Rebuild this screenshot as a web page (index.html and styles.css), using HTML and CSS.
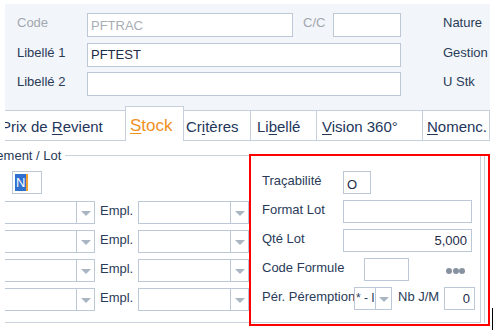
FILE: index.html
```html
<!DOCTYPE html>
<html lang="fr">
<head>
    <meta charset="UTF-8">
    <title>Article - Stock</title>
    <link rel="stylesheet" href="styles.css">
</head>
<body>
    <div class="header">
        <div class="hdr-grid">
            <span class="lbl muted">Code</span>
            <input class="fld fld-code muted-text" value="PFTRAC" readonly>
            <span class="lbl muted lbl-cc">C/C</span>
            <input class="fld" value="" readonly>
            <span class="lbl lbl-side">Nature</span>

            <span class="lbl">Libellé 1</span>
            <input class="fld fld-wide" value="PFTEST" readonly>
            <span class="lbl lbl-side">Gestion</span>

            <span class="lbl">Libellé 2</span>
            <input class="fld fld-wide" value="" readonly>
            <span class="lbl lbl-side">U Stk</span>
        </div>
    </div>

    <div class="tabs">
        <div class="tab tab-prix">Prix de <u>R</u>evient</div>
        <div class="tab tab-active"><u>S</u>tock</div>
        <div class="tab tab-crit">Cr<u>i</u>tères</div>
        <div class="tab tab-lib">Li<u>b</u>ellé</div>
        <div class="tab tab-vision"><u>V</u>ision 360°</div>
        <div class="tab tab-nom"><u>N</u>omenc.</div>
    </div>

    <div class="content">
        <div class="fs-left">
            <div class="legend"><span>Emplacement / Lot</span></div>
            <div class="row row-first">
                <div class="fld fld-n"><span class="sel">N</span></div>
            </div>
            <div class="row">
                <div class="combo combo-a"><span class="arrow"></span></div>
                <span class="lbl lbl-empl">Empl.</span>
                <div class="combo combo-b"><span class="arrow"></span></div>
            </div>
            <div class="row">
                <div class="combo combo-a"><span class="arrow"></span></div>
                <span class="lbl lbl-empl">Empl.</span>
                <div class="combo combo-b"><span class="arrow"></span></div>
            </div>
            <div class="row">
                <div class="combo combo-a"><span class="arrow"></span></div>
                <span class="lbl lbl-empl">Empl.</span>
                <div class="combo combo-b"><span class="arrow"></span></div>
            </div>
            <div class="row">
                <div class="combo combo-a"><span class="arrow"></span></div>
                <span class="lbl lbl-empl">Empl.</span>
                <div class="combo combo-b"><span class="arrow"></span></div>
            </div>
        </div>

        <div class="panel">
            <div class="panel-frame">
                <div class="panel-body">
                    <div class="row">
                        <span class="lbl plbl">Traçabilité</span>
                        <input class="fld fld-trac" value="O" readonly>
                    </div>
                    <div class="row">
                        <span class="lbl plbl">Format Lot</span>
                        <input class="fld fld-long" value="" readonly>
                    </div>
                    <div class="row">
                        <span class="lbl plbl">Qté Lot</span>
                        <input class="fld fld-long num" value="5,000" readonly>
                    </div>
                    <div class="row">
                        <span class="lbl plbl">Code Formule</span>
                        <input class="fld fld-formule" value="" readonly>
                        <span class="dots"><i></i><i></i><i></i></span>
                    </div>
                    <div class="row">
                        <span class="lbl plbl plbl-per">Pér. Péremption</span>
                        <div class="combo combo-per"><span class="combo-text">* - Illimité</span><span class="arrow"></span></div>
                        <span class="lbl lbl-nb">Nb J/M</span>
                        <input class="fld fld-nb num" value="0" readonly>
                    </div>
                </div>
            </div>
        </div>
        <div class="caret"></div>
    </div>
</body>
</html>
```

FILE: styles.css
```css
* {
    box-sizing: border-box;
}

body {
    margin: 0;
    width: 498px;
    height: 330px;
    overflow: hidden;
    background: #fff;
    font-family: "Liberation Sans", Arial, sans-serif;
    font-size: 13px;
    color: #2a3b58;
}

/* top block */
.header {
    margin: 4px 8px 0 5px;
    height: 102px;
    background: #f2f5f9;
    padding: 9px 0 0 12px;
}

.hdr-grid {
    display: grid;
    grid-template-columns: 70px 206px 40px 68px 42px 1fr;
    grid-auto-rows: 24px;
    row-gap: 5.5px;
}

.lbl {
    line-height: 20px;
    white-space: nowrap;
}

.muted {
    color: #a2a7af;
}

.lbl-cc {
    padding-left: 10px;
}

.lbl-side {
    grid-column: 6;
}

.fld {
    height: 24px;
    border: 1px solid #bcc8d5;
    background: #fff;
    font-family: inherit;
    font-size: 13px;
    color: #1c2b47;
    padding: 0 3px;
    outline: none;
    margin: 0;
}

.muted-text {
    color: #a8adb4;
}

.fld-wide {
    grid-column: 2 / 5;
}

/* tabs */
.tabs {
    display: flex;
    align-items: flex-end;
    height: 35px;
    margin: 0 8px 0 5px;
    background: #f2f5f9;
    overflow: hidden;
}

.tab {
    flex: none;
    height: 31px;
    background: #fff;
    border-top: 1px solid #c5d0dc;
    border-bottom: 1px solid #c5d0dc;
    border-right: 1px solid #c5d0dc;
    padding: 2px 0 0 4px;
    line-height: 27px;
    font-size: 15px;
    color: #23365a;
    white-space: nowrap;
}

.tab u {
    text-underline-offset: 2px;
}

.tab-prix {
    width: 128px;
    margin-left: -7px;
    padding-left: 3px;
}

.tab-active {
    width: 59px;
    height: 35px;
    margin-left: -1px;
    border-left: 1px solid #c5d0dc;
    border-bottom: none;
    padding-top: 4px;
    line-height: 30px;
    font-size: 17px;
    color: #f0911c;
}

.tab-crit {
    width: 67px;
    padding-left: 2px;
}

.tab-lib {
    width: 66px;
    padding-left: 6px;
}

.tab-vision {
    width: 106px;
    padding-left: 5px;
}

.tab-nom {
    flex: 1;
}

/* stock content */
.content {
    display: flex;
    height: 182px;
    margin: 7px 0 0 5px;
}

.fs-left {
    width: 244px;
    flex: none;
    display: flex;
    flex-direction: column;
    gap: 6px;
    border-bottom: 1px solid #c8d2dc;
    height: 175px;
}

.legend {
    display: flex;
    align-items: center;
    height: 14px;
    margin-left: -52px;
    white-space: nowrap;
}

.legend::after {
    content: '';
    flex: 1;
    border-top: 1px solid #c8d2dc;
    margin-left: 4px;
}

.row {
    display: flex;
    align-items: flex-start;
    height: 23px;
}

.row-first {
    margin-top: 3px;
    margin-bottom: 1px;
}

.fld-n {
    height: 23px;
    width: 30px;
    margin-left: 7px;
    padding: 2px 0 0 2px;
}

.sel {
    display: inline-block;
    height: 17px;
    line-height: 17px;
    padding: 0 1px;
    background: #2f6fd0;
    color: #fff;
    border-right: 2px solid #f0a030;
}

.combo {
    display: flex;
    justify-content: flex-end;
    height: 23px;
    border: 1px solid #bcc8d5;
    background: #fff;
}

.arrow {
    width: 18px;
    border-left: 1px solid #bcc8d5;
    display: flex;
    align-items: center;
    justify-content: center;
}

.arrow::after {
    content: '';
    border-left: 5px solid transparent;
    border-right: 5px solid transparent;
    border-top: 5px solid #a9b5c3;
    margin-top: 1px;
}

.combo-a {
    width: 90px;
    border-left: none;
}

.combo-b {
    width: 111px;
}

.lbl-empl {
    width: 43px;
    padding-left: 5px;
}

/* framed panel on the right */
.panel {
    flex: none;
    width: 241px;
    height: 172px;
    margin-top: 6px;
    border: 2px solid #ff0000;
    padding: 0 3px 1px 0;
}

.panel-frame {
    height: 100%;
    border-right: 1px solid #c8d2dc;
    padding-right: 3px;
}

.panel-body {
    height: 100%;
    border-right: 1px solid #c8d2dc;
    border-bottom: 1px solid #c8d2dc;
    padding: 15px 0 0 11px;
    display: flex;
    flex-direction: column;
    gap: 6px;
}

.plbl {
    width: 81px;
    flex: none;
}

.plbl-per {
    width: 92px;
    overflow: hidden;
}

.fld-trac {
    width: 28px;
    height: 23px;
    padding-top: 3px;
}

.fld-long {
    width: 129px;
    height: 23px;
}

.num {
    text-align: right;
    padding-right: 4px;
}

.fld-formule {
    width: 45px;
    height: 23px;
    margin-left: 21px;
}

.dots {
    display: flex;
    margin: 10px 0 0 37px;
}

.dots i {
    width: 6px;
    height: 6px;
    border-radius: 50%;
    background: #8792a0;
    margin-right: 0.5px;
}

.combo-per {
    width: 38px;
    flex: none;
}

.combo-text {
    flex: 1;
    overflow: hidden;
    white-space: nowrap;
    padding-left: 1px;
    line-height: 20px;
    font-size: 12px;
    color: #2a3b58;
}

.combo-per .arrow {
    width: 16px;
    flex: none;
}

.lbl-nb {
    width: 52px;
    padding-left: 6px;
}

.fld-nb {
    width: 31px;
    height: 23px;
}

.caret {
    width: 1px;
    height: 22px;
    background: #000;
    align-self: flex-end;
    margin-left: 2px;
}
```
